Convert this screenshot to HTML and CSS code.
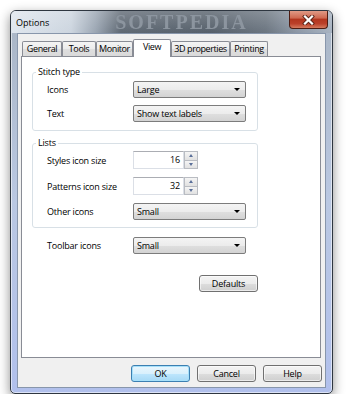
FILE: index.html
```html
<!DOCTYPE html>
<html>
<head>
    <title>Options</title>
    <link rel="stylesheet" href="styles.css">
</head>
<body>
    <div class="window">
        <div class="titlebar">
            <span class="title">Options</span>
            <span class="glass-mark">SOFTPEDIA</span>
            <button class="close-btn">
                <svg width="13" height="10" viewBox="0 0 13 10">
                    <path d="M3 1.5 L10 8.5 M10 1.5 L3 8.5" stroke="#5a2418" stroke-width="4" stroke-linecap="square"/>
                    <path d="M3 1.5 L10 8.5 M10 1.5 L3 8.5" stroke="#fff" stroke-width="2.2" stroke-linecap="square"/>
                </svg>
            </button>
        </div>
        <div class="client">
            <div class="tabs">
                <div class="tab tab-general">General</div>
                <div class="tab tab-tools">Tools</div>
                <div class="tab tab-monitor">Monitor</div>
                <div class="tab tab-view selected">View</div>
                <div class="tab tab-3d">3D properties</div>
                <div class="tab tab-printing">Printing</div>
            </div>
            <div class="panel">
                <fieldset class="group">
                    <legend>Stitch type</legend>
                    <div class="group-rows stitch-rows">
                        <span class="label">Icons</span>
                        <div class="combo">Large<span class="combo-arrow"></span></div>
                        <span class="label">Text</span>
                        <div class="combo">Show text labels<span class="combo-arrow"></span></div>
                    </div>
                </fieldset>
                <fieldset class="group group-lists">
                    <legend>Lists</legend>
                    <div class="group-rows lists-rows">
                        <span class="label">Styles icon size</span>
                        <div class="spin">
                            <div class="spin-edit">16</div>
                            <div class="spin-buttons">
                                <div class="spin-btn"><span class="spin-up"></span></div>
                                <div class="spin-btn"><span class="spin-down"></span></div>
                            </div>
                        </div>
                        <span class="label">Patterns icon size</span>
                        <div class="spin">
                            <div class="spin-edit">32</div>
                            <div class="spin-buttons">
                                <div class="spin-btn"><span class="spin-up"></span></div>
                                <div class="spin-btn"><span class="spin-down"></span></div>
                            </div>
                        </div>
                        <span class="label">Other icons</span>
                        <div class="combo">Small<span class="combo-arrow"></span></div>
                    </div>
                </fieldset>
                <div class="toolbar-row">
                    <span class="label">Toolbar icons</span>
                    <div class="combo">Small<span class="combo-arrow"></span></div>
                </div>
                <div class="defaults-row">
                    <button class="btn">Defaults</button>
                </div>
            </div>
            <div class="dialog-buttons">
                <button class="btn btn-default">OK</button>
                <button class="btn">Cancel</button>
                <button class="btn">Help</button>
            </div>
        </div>
    </div>
</body>
</html>
```

FILE: styles.css
```css
/* Windows 7 style options dialog */
body {
    margin: 0;
    background: #fff;
    font-family: "Open Sans", "Noto Sans", sans-serif;
    font-size: 9px;
    letter-spacing: -0.2px;
    color: #000;
}

.window {
    box-sizing: border-box;
    width: 323px;
    height: 384px;
    margin: 10px 0 0 10px;
    padding: 0 6px 5px 6px;
    display: flex;
    flex-direction: column;
    border: 1px solid #2e3640;
    border-radius: 6px 6px 5px 5px;
    background: linear-gradient(to bottom, #a9b5c4 0%, #bac8e2 50%, #b1c0ec 100%);
    box-shadow: 0 4px 12px rgba(0, 0, 0, 0.45), inset 0 0 0 1px rgba(255, 255, 255, 0.55);
    overflow: hidden;
}

.titlebar {
    height: 22px;
    margin: 0 -6px;
    display: flex;
    align-items: center;
    overflow: hidden;
    background:
        linear-gradient(to bottom, rgba(255, 255, 255, 0.2), rgba(255, 255, 255, 0)),
        linear-gradient(to right, #dfe6ee 0, #ccd5df 60px, #9aa5b2 85px, #5e6873 110px, #56606b 200px, #6b7580 255px, #8b96a4 285px, #a8b3c1 321px);
}

.title {
    padding-left: 5px;
    letter-spacing: 0;
}

.glass-mark {
    margin-left: 66px;
    font-family: "Liberation Serif", serif;
    font-weight: bold;
    font-size: 20px;
    letter-spacing: 2px;
    line-height: 22px;
    color: #8c959f;
    filter: blur(0.7px);
}

.close-btn {
    align-self: flex-start;
    margin-left: auto;
    margin-right: 4px;
    width: 39px;
    height: 18px;
    padding: 0;
    border: 1px solid #4e1c12;
    border-top: none;
    border-radius: 0 0 4px 4px;
    background: linear-gradient(to bottom, #e09a86 0%, #cf6a52 40%, #b3361f 50%, #bb402a 75%, #d57a5e 100%);
    display: flex;
    align-items: center;
    justify-content: center;
}

.client {
    flex: 1;
    display: flex;
    flex-direction: column;
    border: 1px solid #8896ab;
    background: #f0f0f0;
}

.tabs {
    display: flex;
    align-items: flex-end;
    height: 17px;
    margin: 5px 0 0 3px;
    padding-left: 1px;
}

.tab {
    box-sizing: border-box;
    height: 15px;
    line-height: 13px;
    text-align: center;
    white-space: nowrap;
    letter-spacing: -0.4px;
    border: 1px solid #898c95;
    border-bottom: none;
    border-radius: 2px 2px 0 0;
    background: linear-gradient(to bottom, #f4f4f4 0%, #ebebeb 50%, #dedede 51%, #dadada 100%);
}

.tab.selected {
    position: relative;
    z-index: 1;
    height: 18px;
    margin-bottom: -1px;
    line-height: 14px;
    background: #fff;
}

.tab-general { width: 40px; }
.tab-tools { width: 34px; }
.tab-monitor { width: 37px; }
.tab-view { width: 38px; }
.tab-3d { width: 59px; }
.tab-printing { width: 38px; }

.panel {
    box-sizing: border-box;
    width: 300px;
    height: 302px;
    margin-left: 3px;
    padding: 9px 0 0 10px;
    display: flex;
    flex-direction: column;
    border: 1px solid #898c95;
    background: #fff;
}

.group {
    box-sizing: border-box;
    width: 226px;
    margin: 0;
    padding: 0;
    border: 1px solid #d8e0e6;
    border-radius: 3px;
}

.group legend {
    margin-left: 3px;
    padding: 0 2px;
    line-height: 12px;
}

.group-lists {
    margin-top: 6px;
}

.group-rows {
    display: grid;
    grid-template-columns: 86px 113px;
    align-items: center;
    padding: 3px 11px 8px 14px;
    row-gap: 7px;
}

.lists-rows {
    padding-top: 2px;
    padding-bottom: 7px;
    row-gap: 8px;
}

.toolbar-row {
    display: grid;
    grid-template-columns: 86px 113px;
    align-items: center;
    margin-top: 9px;
    padding-left: 15px;
}

.combo {
    box-sizing: border-box;
    height: 17px;
    display: flex;
    align-items: center;
    justify-content: space-between;
    padding: 0 5px 0 3px;
    border: 1px solid #7c7c7c;
    border-radius: 2px;
    background: linear-gradient(to bottom, #f4f4f4 0%, #ececec 50%, #dfdfdf 51%, #d3d3d3 100%);
}

.combo-arrow {
    width: 0;
    height: 0;
    border-left: 3px solid transparent;
    border-right: 3px solid transparent;
    border-top: 3px solid #000;
}

.spin {
    display: flex;
    height: 18px;
}

.spin-edit {
    box-sizing: border-box;
    width: 51px;
    padding-right: 3px;
    text-align: right;
    line-height: 16px;
    border: 1px solid #dbdfe6;
    border-top-color: #abadb3;
    background: #fff;
}

.spin-buttons {
    width: 14px;
    display: flex;
    flex-direction: column;
}

.spin-btn {
    box-sizing: border-box;
    flex: 1;
    display: flex;
    align-items: center;
    justify-content: center;
    border: 1px solid #b9bcc2;
    background: linear-gradient(to bottom, #f5f5f5, #e1e1e1);
}

.spin-btn + .spin-btn {
    border-top: none;
}

.spin-up {
    width: 0;
    height: 0;
    border-left: 2.5px solid transparent;
    border-right: 2.5px solid transparent;
    border-bottom: 3px solid #5a6f99;
}

.spin-down {
    width: 0;
    height: 0;
    border-left: 2.5px solid transparent;
    border-right: 2.5px solid transparent;
    border-top: 3px solid #5a6f99;
}

.defaults-row {
    width: 226px;
    display: flex;
    justify-content: flex-end;
    margin-top: 21px;
}

.btn {
    box-sizing: border-box;
    width: 59px;
    height: 17px;
    padding: 0;
    font-family: inherit;
    font-size: 9px;
    letter-spacing: inherit;
    color: #000;
    border: 1px solid #707070;
    border-radius: 3px;
    background: linear-gradient(to bottom, #f4f4f4 0%, #ebebeb 50%, #dddddd 51%, #cfcfcf 100%);
    box-shadow: inset 0 0 0 1px rgba(255, 255, 255, 0.6);
}

.btn-default {
    border-color: #3c7fb1;
    background: linear-gradient(to bottom, #eaf6fd 0%, #d9f0fc 50%, #bee6fd 51%, #a7d9f5 100%);
    box-shadow: inset 0 0 0 1px #a6e0fa;
}

.dialog-buttons {
    display: flex;
    justify-content: flex-end;
    gap: 7px;
    margin: 7px 3px 0 0;
}
```
